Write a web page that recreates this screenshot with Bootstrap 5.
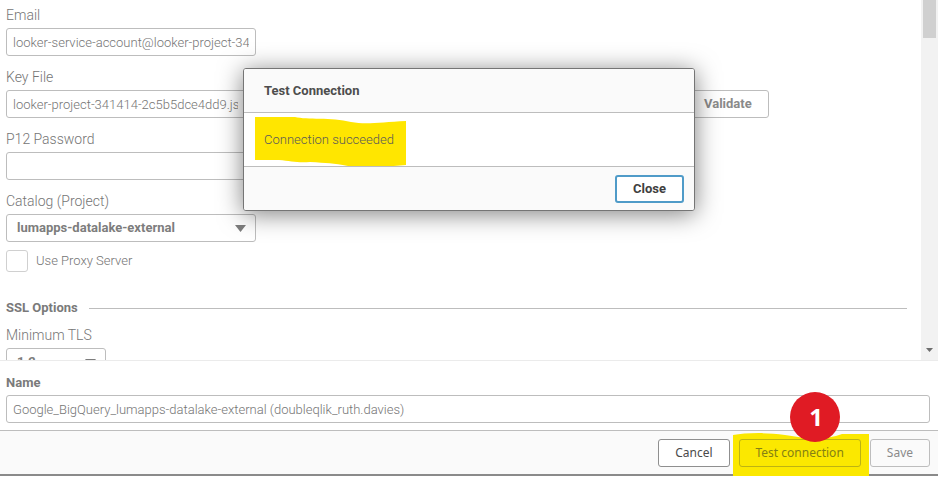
<!DOCTYPE html>
<html lang="en">
<head>
<meta charset="utf-8">
<meta name="viewport" content="width=device-width, initial-scale=1">
<title>Test Connection</title>
<link href="https://cdn.jsdelivr.net/npm/bootstrap@5.3.0/dist/css/bootstrap.min.css" rel="stylesheet">
<style>
  body { font: 300 13px/20px Roboto, "Liberation Sans", sans-serif; color: #757575; background: #fff; }
  .window { min-height: 0; border-bottom: 2px solid #8a8a8a; margin-bottom: 7px; }
  .pane { flex: 1 1 0; min-height: 0; border-bottom: 1px solid #ebebeb; }
  .pane-form { padding: 4px 14px 0 6px; }
  .field { margin-bottom: 10px; }
  .field-label { display: block; height: 24px; line-height: 22px; font-size: 14px; }
  .text-field, .pick {
    height: 28px; padding: 0 6px; border: 1px solid #bdbdbd; border-radius: 3px;
    font-size: 13px; font-weight: 300; line-height: 20px; color: #757575; background-color: #fff;
  }
  .w-field { width: 250px; }
  .w-file { width: 673px; padding-right: 440px; }
  .w-tls { width: 100px; }
  .pick {
    padding: 0 10px; font-weight: 700; color: #7d7d7d; appearance: none; display: block;
  }
  .pick-wrap { position: relative; }
  .pick-wrap svg { position: absolute; right: 10px; top: 10px; pointer-events: none; }
  .tick { appearance: none; width: 22px; height: 22px; border: 1px solid #d0d0d0; border-radius: 3px; background: #fff; margin: 0 8px 0 0; }
  .tick-row { margin-top: -3px; margin-bottom: 24px; height: 24px; font-size: 13px; }
  .section-head { margin-bottom: 5px; }
  .section-title { font-size: 13px; font-weight: 700; color: #7a7a7a; margin: 0 11px 0 0; line-height: 22px; }
  .section-line { height: 1px; background: #bdbdbd; }
  .scroll-track { width: 17px; background: #f2f2f2; }
  .scroll-thumb { width: 13px; height: 38px; background: #d0d0d0; }
  .push { height: 28px; padding: 0 16px; border: 1px solid #bdbdbd; border-radius: 3px; font-size: 13px; line-height: 20px; background: transparent; color: #8a8a8a; }
  .push-file { font-weight: 700; }
  .push-close { font-weight: 700; color: #404040; border: 2px solid #4f9bc8; background: #fff; }
  .name-area { padding: 12px 8px 7px 6px; }
  .name-label { font-weight: 700; color: #7a7a7a; font-size: 13px; margin-bottom: 2px; }
  .actions { border-top: 1px solid #bdbdbd; background: #fafafa; padding: 8px 8px 7px; gap: 9px; }
  .actions .push { font-family: "Noto Sans", "Open Sans", sans-serif; font-size: 12px; font-weight: 400; }
  .actions .push-cancel { color: #4a4a4a; border-color: #8f8f8f; background: #fff; }
  .marked { position: relative; z-index: 0; }
  .actions .marked .push { color: #858014; border-color: #bdb312; }
  .marker { position: absolute; z-index: -1; fill: #ffe600; }
  .marker-text { left: -9px; top: -15px; }
  .marker-button { left: -6px; top: -6px; fill: #fbe800; }
  .step { position: absolute; left: 51px; top: -47px; width: 50px; height: 50px; border-radius: 50%; background: #e01b24; color: #fff; font: 700 24px/50px "Open Sans", sans-serif; text-align: center; padding-left: 3px; }
  .dialog-place { position: absolute; top: 68px; left: 0; right: 0; pointer-events: none; }
  .dialog-box { width: 452px; border: 1px solid #757575; border-radius: 3px; background: #fff; box-shadow: 0 3px 24px rgba(0,0,0,.5); pointer-events: auto; overflow: clip; }
  .dialog-head, .dialog-foot { height: 44px; background: #fafafa; }
  .dialog-head { padding: 0 20px; border-bottom: 1px solid #bdbdbd; }
  .dialog-head h1 { font-size: 13px; font-weight: 700; line-height: 20px; color: #4d4d4d; margin: 0; }
  .dialog-text { padding: 17px 20px 16px; color: #595959; font-size: 13px; }
  .dialog-foot { padding: 0 10px; border-top: 1px solid #bdbdbd; }
</style>
</head>
<body>
<div class="vh-100 d-flex flex-column overflow-hidden">
  <main class="window flex-grow-1 d-flex flex-column">
    <div class="pane d-flex overflow-hidden">
      <form class="pane-form flex-grow-1">
        <div class="field">
          <label class="field-label" for="email">Email</label>
          <input class="text-field w-field d-block" id="email" type="text" value="looker-service-account@looker-project-341414.iam">
        </div>
        <div class="field">
          <label class="field-label" for="keyfile">Key File</label>
          <div class="d-flex gap-2">
            <input class="text-field w-file" id="keyfile" type="text" value="looker-project-341414-2c5b5dce4dd9.json">
            <button class="push push-file" type="button" id="validate">Validate</button>
          </div>
        </div>
        <div class="field">
          <label class="field-label" for="p12">P12 Password</label>
          <input class="text-field w-field d-block" id="p12" type="password">
        </div>
        <div class="field">
          <label class="field-label" for="catalog">Catalog (Project)</label>
          <div class="pick-wrap w-field">
            <select class="pick w-100" id="catalog"><option>lumapps-datalake-external</option></select>
            <svg width="11" height="8" viewBox="0 0 11 8" aria-hidden="true"><path d="M0 1h11L5.5 8z" fill="#7d7d7d"/></svg>
          </div>
        </div>
        <div class="tick-row d-flex align-items-center">
          <input class="tick" type="checkbox" id="proxy">
          <label for="proxy">Use Proxy Server</label>
        </div>
        <div class="section-head d-flex align-items-center">
          <h2 class="section-title">SSL Options</h2>
          <div class="section-line flex-grow-1"></div>
        </div>
        <label class="field-label" for="tls">Minimum TLS</label>
        <div class="pick-wrap w-tls">
          <select class="pick w-100" id="tls"><option>1.2</option></select>
          <svg width="11" height="8" viewBox="0 0 11 8" aria-hidden="true"><path d="M0 1h11L5.5 8z" fill="#7d7d7d"/></svg>
        </div>
      </form>
      <div class="scroll-track flex-shrink-0 d-flex flex-column align-items-center justify-content-between" aria-hidden="true">
        <div class="scroll-thumb"></div>
        <svg class="mb-1" width="9" height="9" viewBox="0 0 9 9"><path d="M1 1h7L4.500 5z" fill="#6e6e6e"/></svg>
      </div>
    </div>
    <div class="name-area">
      <label class="name-label d-block" for="name">Name</label>
      <input class="text-field w-100 d-block" id="name" type="text" value="Google_BigQuery_lumapps-datalake-external (doubleqlik_ruth.davies)">
    </div>
    <div class="actions d-flex justify-content-end">
      <button class="push push-cancel" type="button">Cancel</button>
      <div class="marked">
        <svg class="marker marker-button" width="136" height="43" viewBox="0 0 136 43" aria-hidden="true"><path d="M0 2C12 0 32-1 52 2C75 6 93 7 109 1L136 1V43H0z"/></svg>
        <button class="push" type="button">Test connection</button>
        <span class="step">1</span>
      </div>
      <button class="push" type="button">Save</button>
    </div>
  </main>
</div>

<div class="dialog-place d-flex justify-content-center">
  <div class="dialog-box" role="dialog" aria-labelledby="dialog-title">
    <div class="dialog-head d-flex align-items-center"><h1 id="dialog-title">Test Connection</h1></div>
    <div class="dialog-text">
      <span class="marked">
        <svg class="marker marker-text" width="151" height="49" viewBox="0 0 151 49" aria-hidden="true"><path d="M0 0H40C52 3 76 0 96 5C112 8 126 5 151 4V48C132 50 108 50 93 49C78 46 72 46 55 45C42 46 36 44 24 43H0z"/></svg>
        Connection succeeded
      </span>
    </div>
    <div class="dialog-foot d-flex align-items-center justify-content-end">
      <button class="push push-close" type="button">Close</button>
    </div>
  </div>
</div>
<script src="https://cdn.jsdelivr.net/npm/bootstrap@5.3.0/dist/js/bootstrap.bundle.min.js"></script>
</body>
</html>
